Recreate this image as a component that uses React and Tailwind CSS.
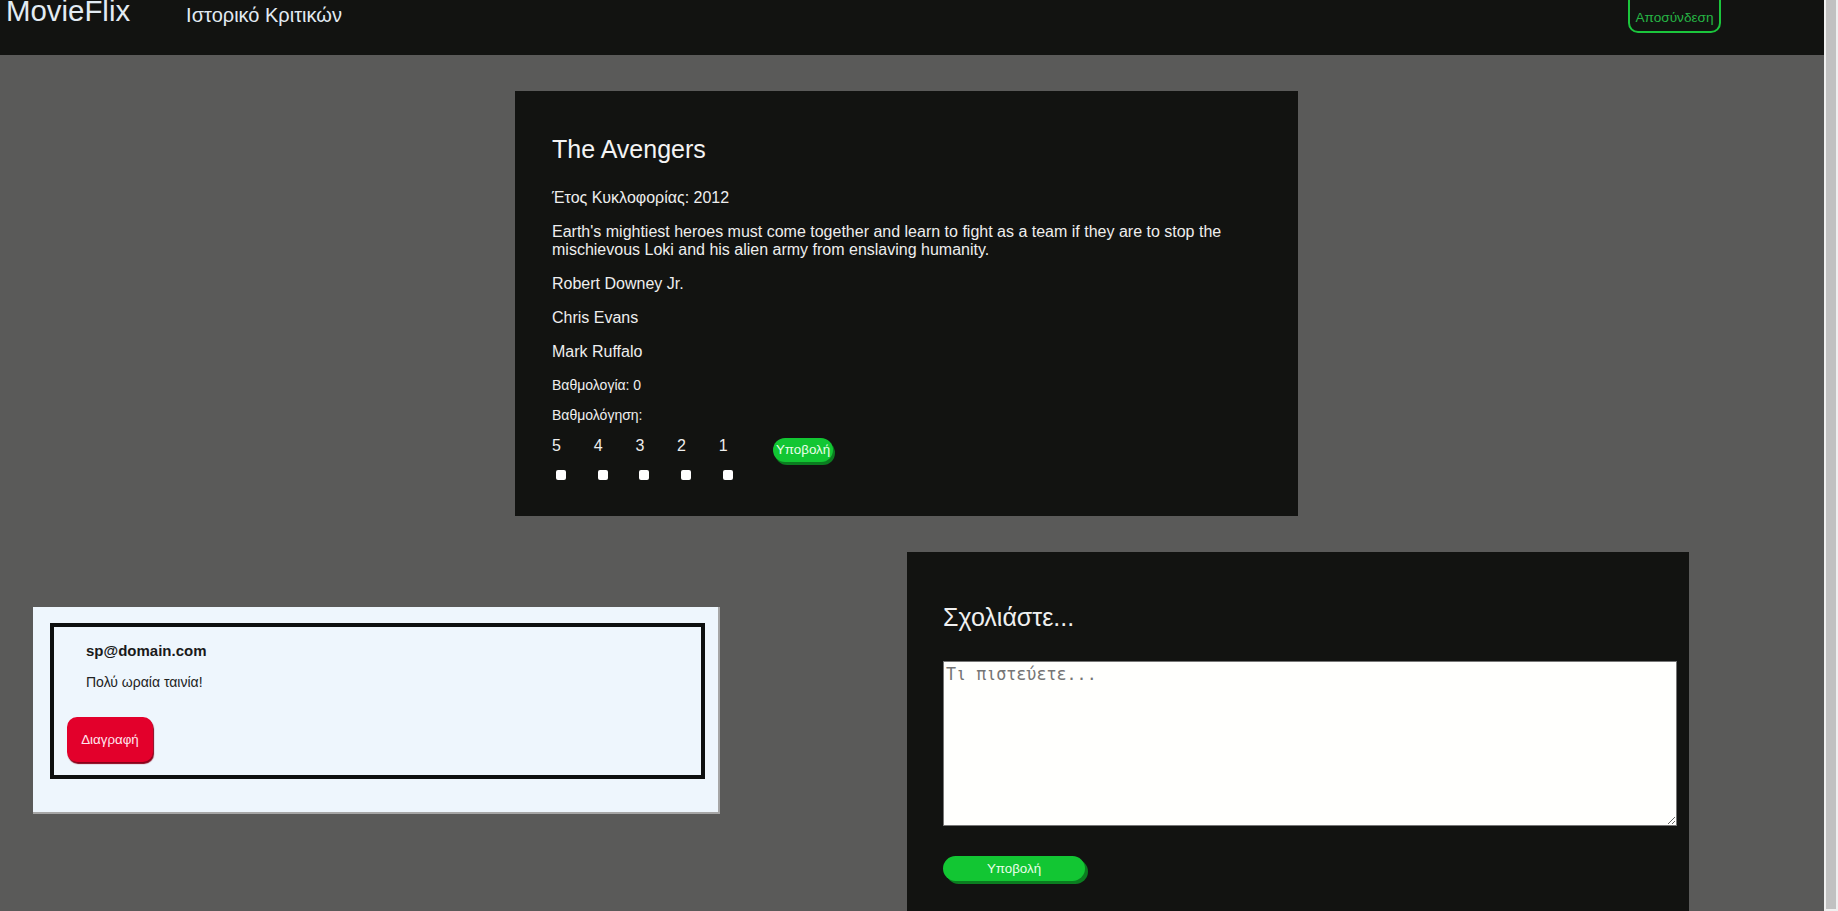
export default function App() {
  const ratings = ["5", "4", "3", "2", "1"];
  return (
    <div className="flex h-[911px] overflow-hidden bg-[#5a5a59] [font-family:'Liberation_Sans',Arial,sans-serif]">
      <div className="flex min-w-0 flex-1 flex-col">
        <header className="flex h-[55px] shrink-0 items-start overflow-hidden bg-[#121311]">
          <div className="ml-[6px] mt-[-6px] text-[29.4px] leading-[normal] text-[#e2ebf3]">MovieFlix</div>
          <div className="ml-[56px] mt-[4px] text-[20px] leading-[normal] text-[#e2ebf3]">Ιστορικό Κριτικών</div>
          <button className="ml-auto mr-[103px] mt-[-9px] h-[42px] w-[93px] rounded-[10px] border-2 border-[#1bc53c] pt-[11px] text-center text-[13.6px] leading-[normal] text-[#26b545]">
            Αποσύνδεση
          </button>
        </header>

        <section className="ml-[515px] mt-[36px] h-[425px] w-[783px] shrink-0 bg-[#121311] pl-[37px] pr-[32px] pt-[44px] text-[#eeeeee]">
          <h2 className="text-[25px] leading-[normal] text-[#f4f4f4]">The Avengers</h2>
          <p className="mt-[24.5px] text-[16px] leading-[normal]">Έτος Κυκλοφορίας: 2012</p>
          <p className="mt-[16px] text-[16px] leading-[normal]">
            Earth's mightiest heroes must come together and learn to fight as a team if they are to stop the mischievous Loki and his alien army from enslaving humanity.
          </p>
          <p className="mt-[16px] text-[16px] leading-[normal]">Robert Downey Jr.</p>
          <p className="mt-[16px] text-[16px] leading-[normal]">Chris Evans</p>
          <p className="mt-[16px] text-[16px] leading-[normal]">Mark Ruffalo</p>
          <p className="mt-[16.4px] text-[14px] leading-[normal]">Βαθμολογία: 0</p>
          <p className="mt-[13.9px] text-[14px] leading-[normal]">Βαθμολόγηση:</p>
          <div className="mt-[14.1px] flex items-start">
            {ratings.map((r) => (
              <label key={r} className="flex w-[41.7px] flex-col items-start">
                <span className="text-[16px] leading-[normal]">{r}</span>
                <input type="checkbox" className="ml-[4px] mt-[15px] h-[10px] w-[10px] appearance-none rounded-[2px] bg-white" />
              </label>
            ))}
            <button className="ml-[12.5px] mt-[1px] h-[24px] rounded-full bg-[#12c633] px-[3px] text-[13.33px] leading-[normal] text-[#eaffea] shadow-[2px_3px_0_#0b7d20]">
              Υποβολή
            </button>
          </div>
        </section>

        <div className="mt-[36px] flex items-start">
          <div className="ml-[33px] mt-[55px] h-[207px] w-[687px] shrink-0 border-b-2 border-r-2 border-[#a6a6a6] bg-[#eef6fd] pl-[17px] pt-[16px]">
            <div className="flex h-[156px] w-[655px] flex-col items-start border-4 border-[#0d0f0f]">
              <p className="ml-[32px] mt-[15.2px] text-[15px] font-bold leading-[normal] text-[#1a1a1a]">sp@domain.com</p>
              <p className="ml-[32px] mt-[14.5px] text-[14px] leading-[normal] text-[#222222]">Πολύ ωραία ταινία!</p>
              <button className="ml-[13px] mt-[27px] h-[45px] w-[86px] rounded-[10px] bg-[#e3002b] text-[13.33px] leading-[normal] text-[#ffe6ee] shadow-[1px_2px_1px_#8a0019]">
                Διαγραφή
              </button>
            </div>
          </div>

          <div className="ml-[187px] h-[420px] w-[782px] shrink-0 bg-[#121311] pl-[36px] pt-[51px]">
            <h2 className="text-[25px] leading-[normal] text-[#f0f0f0]">Σχολιάστε...</h2>
            <textarea
              placeholder="Τι πιστεύετε..."
              className="mt-[29.25px] block h-[165px] w-[734px] border border-[#767676] bg-[#fffffd] p-[2px] text-[16.7px] leading-[normal] text-black [font-family:'DejaVu_Sans_Mono',monospace] placeholder:text-[#757575]"
            />
            <button className="mt-[30px] block h-[25px] w-[142px] rounded-full bg-[#12c633] text-[13.33px] leading-[normal] text-[#eaffea] shadow-[3px_3px_0_#0b7d20]">
              Υποβολή
            </button>
          </div>
        </div>
      </div>

      <div className="w-[14px] shrink-0 bg-[#f0f0f0] pl-[2px]">
        <div className="h-[909px] w-[10px] bg-[#c1c1c1]" />
      </div>
    </div>
  );
}
